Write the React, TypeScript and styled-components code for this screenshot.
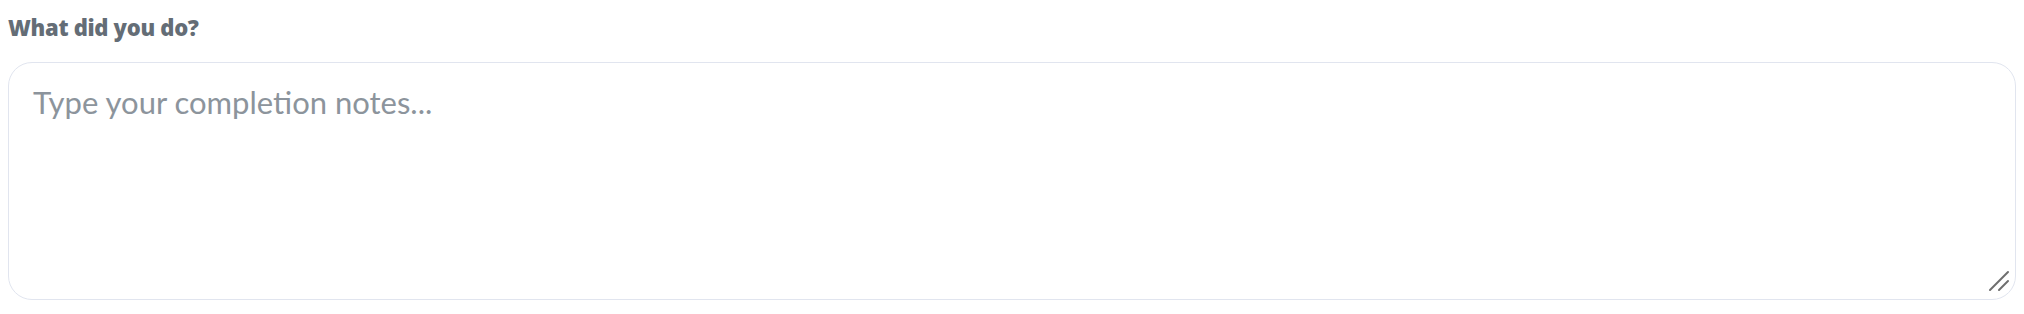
import styled, { createGlobalStyle } from "styled-components";

const GlobalStyle = createGlobalStyle`
  body {
    margin: 8px;
    background: #ffffff;
    font-family: Lato, "Liberation Sans", sans-serif;
  }
`;

const Field = styled.div`
  display: flex;
  flex-direction: column;
  gap: 21px;
`;

const Label = styled.label`
  font-family: "Open Sans", "Liberation Sans", sans-serif;
  font-size: 22px;
  line-height: 28px;
  font-weight: 800;
  letter-spacing: -0.3px;
  color: #646d76;
  padding-top: 5px;
`;

const Box = styled.div`
  position: relative;
`;

const Notes = styled.textarea`
  display: block;
  box-sizing: border-box;
  width: 100%;
  height: 238px;
  padding: 18px 24px;
  border: 1.5px solid #e1e5ef;
  border-radius: 24px;
  font-family: inherit;
  font-size: 31px;
  line-height: 1.4;
  color: #38414a;
  resize: vertical;
  outline: none;

  &::placeholder {
    color: #8c949c;
  }

  &::-webkit-resizer {
    display: none;
  }
`;

// drawn grip, sits over the textarea corner
const Grip = styled.svg`
  position: absolute;
  right: 6px;
  bottom: 8px;
  width: 22px;
  height: 22px;
  pointer-events: none;
`;

export default function App() {
  return (
    <>
      <GlobalStyle />
      <Field>
        <Label htmlFor="notes">What did you do?</Label>
        <Box>
          <Notes id="notes" placeholder="Type your completion notes..." />
          <Grip viewBox="0 0 22 22">
            <line x1="2" y1="20" x2="20" y2="2" stroke="#6e6e6e" strokeWidth="2" strokeLinecap="round" />
            <line x1="11" y1="20" x2="20" y2="11" stroke="#6e6e6e" strokeWidth="2" strokeLinecap="round" />
          </Grip>
        </Box>
      </Field>
    </>
  );
}
